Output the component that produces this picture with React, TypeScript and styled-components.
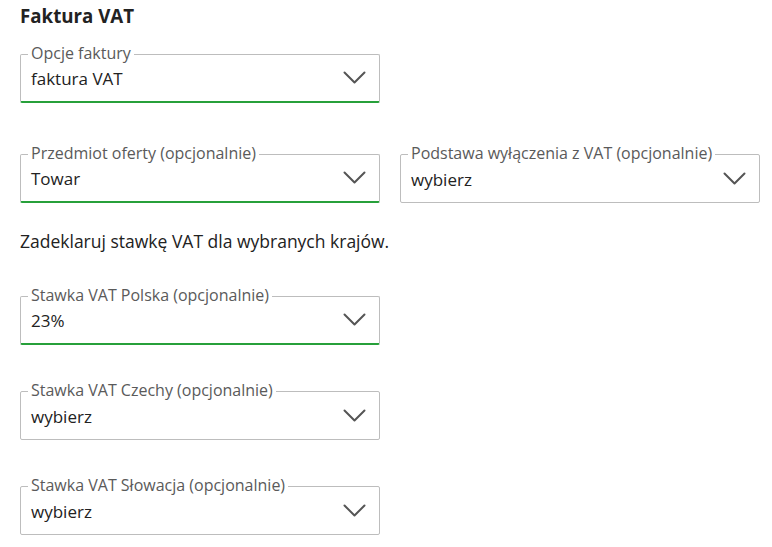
import React from "react";
import styled, { createGlobalStyle } from "styled-components";

const GlobalStyle = createGlobalStyle`
  body {
    margin: 0;
    background: #ffffff;
    font-family: "Open Sans", "Noto Sans", sans-serif;
    color: #222222;
  }
`;

const Page = styled.div`
  display: flex;
  flex-direction: column;
  padding: 0 12px 0 20px;
`;

const Title = styled.h2`
  margin: 3px 0 0;
  font-size: 18.7px;
  line-height: 26px;
  font-weight: 700;
  color: #222222;
`;

const Row = styled.div<{ $top: number }>`
  display: grid;
  grid-template-columns: 360px 360px;
  column-gap: 20px;
  margin-top: ${(p) => p.$top}px;
`;

const Box = styled.div<{ $active?: boolean }>`
  position: relative;
  display: flex;
  align-items: center;
  justify-content: space-between;
  box-sizing: border-box;
  height: 49px;
  padding: 0 13px 0 10px;
  border: 1px solid #bdbdbd;
  border-bottom: ${(p) => (p.$active ? "2px solid #27a03a" : "1px solid #bdbdbd")};
  border-radius: 2px;
  background: #ffffff;
`;

const Label = styled.span`
  position: absolute;
  top: -12px;
  left: 7px;
  padding: 0 3px 0 3px;
  background: #ffffff;
  font-size: 16px;
  line-height: 21px;
  color: #5a5a5a;
  white-space: nowrap;
`;

const Value = styled.span`
  font-size: 17px;
  line-height: 23px;
  color: #222222;
  margin-top: 1px;
`;

const Hint = styled.p`
  margin: 26px 0 0;
  font-size: 17.5px;
  line-height: 24px;
  color: #222222;
`;

const Chevron = () => (
  <svg width="23" height="14" viewBox="0 0 23 14" fill="none">
    <path
      d="M1.5 1.5 L11.5 11.5 L21.5 1.5"
      stroke="#555555"
      strokeWidth="2"
      strokeLinecap="round"
      strokeLinejoin="round"
    />
  </svg>
);

type SelectProps = { label: string; value: string; active?: boolean };

function Select({ label, value, active }: SelectProps) {
  return (
    <Box $active={active}>
      <Label>{label}</Label>
      <Value>{value}</Value>
      <Chevron />
    </Box>
  );
}

export default function App() {
  return (
    <>
      <GlobalStyle />
      <Page>
        <Title>Faktura VAT</Title>
        <Row $top={25}>
          <Select label="Opcje faktury" value="faktura VAT" active />
        </Row>
        <Row $top={51}>
          <Select label="Przedmiot oferty (opcjonalnie)" value="Towar" active />
          <Select label="Podstawa wyłączenia z VAT (opcjonalnie)" value="wybierz" />
        </Row>
        <Hint>Zadeklaruj stawkę VAT dla wybranych krajów.</Hint>
        <Row $top={43}>
          <Select label="Stawka VAT Polska (opcjonalnie)" value="23%" active />
        </Row>
        <Row $top={46}>
          <Select label="Stawka VAT Czechy (opcjonalnie)" value="wybierz" />
        </Row>
        <Row $top={46}>
          <Select label="Stawka VAT Słowacja (opcjonalnie)" value="wybierz" />
        </Row>
      </Page>
    </>
  );
}
